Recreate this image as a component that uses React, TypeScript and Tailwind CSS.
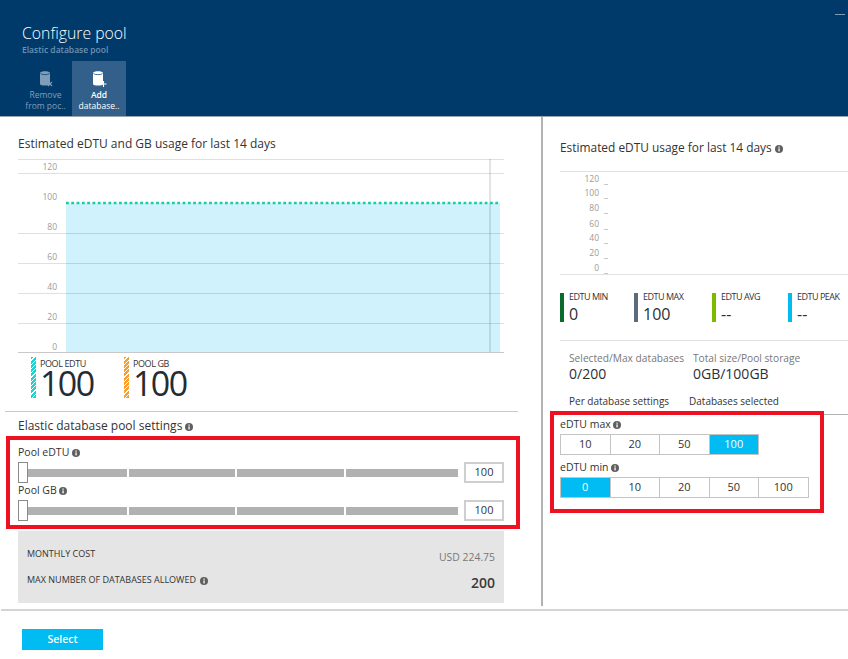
import React from "react";

const Info = ({ className = "" }: { className?: string }) => (
  <svg viewBox="0 0 8 8" className={`inline-block w-[8px] h-[8px] ${className}`}>
    <circle cx="4" cy="4" r="4" fill="#5f5f5f" />
    <rect x="3.4" y="3.4" width="1.3" height="3" fill="#fff" />
    <rect x="3.4" y="1.5" width="1.3" height="1.2" fill="#fff" />
  </svg>
);

const DbIcon = ({ color, mark, badge }: { color: string; mark: string; badge: "x" | "plus" }) => (
  <svg viewBox="0 0 16 18" className="w-[16px] h-[18px]">
    <path d="M2 3 C2 0.5 12 0.5 12 3 V14 C12 16 2 16 2 14 Z" fill={color} />
    <path d="M2.5 3.6 C4 5 10 5 11.5 3.6" fill="none" stroke="#003a6b" strokeWidth="0.7" />
    {badge === "x" ? (
      <path d="M10 12 L14 16 M14 12 L10 16" stroke={mark} strokeWidth="1.1" />
    ) : (
      <path d="M12.5 11 V17 M9.5 14 H15.5" stroke={mark} strokeWidth="1.1" />
    )}
  </svg>
);

const Slider = () => (
  <div className="flex items-center h-[21px]">
    <div className="w-[10px] h-[21px] bg-white border border-[#8a8a8a] shrink-0" />
    <div className="flex gap-[2px] w-[430px] h-[8px]">
      <div className="w-[99px] bg-[#b1b1b1]" />
      <div className="w-[106px] bg-[#b1b1b1]" />
      <div className="w-[107px] bg-[#b1b1b1]" />
      <div className="w-[112px] bg-[#b1b1b1]" />
    </div>
    <div className="ml-[6px] w-[40px] h-[21px] border-2 border-[#cfcfcf] flex items-center justify-center text-[11px] text-[#333]">100</div>
  </div>
);

const Metric = ({ label, value, color, w }: { label: string; value: string; color: string; w: string }) => (
  <div className={`flex ${w}`}>
    <div className="w-[4px] h-[29px] mt-[1px]" style={{ backgroundColor: color }} />
    <div className="ml-[5px] -mt-[1px]">
      <div className="text-[9px] leading-[12px] tracking-[-0.5px] text-[#333]">{label}</div>
      <div className="text-[16px] leading-[20px] mt-[1px] text-[#2b2f36]">{value}</div>
    </div>
  </div>
);

const Choice = ({ items, active }: { items: string[]; active: string }) => (
  <div className="flex">
    {items.map((t, i) => (
      <div
        key={t}
        className={`w-[50.5px] h-[21px] flex items-center justify-center text-[11px] border border-[#c4c4c4] ${i > 0 ? "-ml-px" : ""} ${
          t === active ? "bg-[#00bcf2] text-white border-[#7d8b93]" : "bg-white text-[#333]"
        }`}
      >
        {t}
      </div>
    ))}
  </div>
);

const LeftChart = () => {
  const rows = [
    ["120", 167],
    ["100", 197],
    ["80", 227],
    ["60", 257],
    ["40", 287],
    ["20", 317],
    ["0", 347],
  ] as const;
  return (
    <svg width="486" height="196" viewBox="18 158 486 196" className="block">
      <rect x="66" y="203" width="434" height="149" fill="#cff2fd" />
      {[159.5, 173.5, 233.5, 263.5, 293.5, 323.5].map((y) => (
        <line key={y} x1="18" x2="504" y1={y} y2={y} stroke="#000" strokeOpacity="0.12" />
      ))}
      <line x1="18" x2="504" y1="352.5" y2="352.5" stroke="#c9c9c9" />
      <line x1="490" x2="490" y1="159" y2="352" stroke="#000" strokeOpacity="0.14" strokeWidth="1.5" />
      <line x1="66" x2="500" y1="203" y2="203" stroke="#18cdaa" strokeWidth="2.5" strokeDasharray="2.8 2.5" />
      {rows.map(([t, y]) => (
        <text key={t} x="57" y={y + 3} textAnchor="end" fontSize="8.5" fill="#9a9a9a" fontFamily="Open Sans, sans-serif">{t}</text>
      ))}
    </svg>
  );
};

const RightChart = () => {
  const rows = [
    ["120", 179],
    ["100", 193],
    ["80", 208],
    ["60", 224],
    ["40", 238],
    ["20", 253],
    ["0", 268],
  ] as const;
  return (
    <svg width="288" height="104" viewBox="560 171 288 104" className="block">
      <line x1="560" x2="848" y1="171.5" y2="171.5" stroke="#e2e2e2" />
      <line x1="560" x2="848" y1="274.5" y2="274.5" stroke="#e2e2e2" />
      {rows.map(([t, y]) => (
        <g key={t}>
          <text x="599" y={y + 3} textAnchor="end" fontSize="8.5" fill="#9a9a9a" fontFamily="Open Sans, sans-serif">{t}</text>
          <line x1="604" x2="608" y1={y + 5.5} y2={y + 5.5} stroke="#c8c8c8" />
        </g>
      ))}
    </svg>
  );
};

const Pool = ({ label, stripe, w }: { label: string; stripe: string; w: string }) => (
  <div className={`flex ${w}`}>
    <div className={`w-[5px] h-[41px] ${stripe}`} />
    <div className="ml-[4px]">
      <div className="text-[9px] leading-[11px] tracking-[-0.4px] text-[#333] mt-[1px]">{label}</div>
      <div className="text-[34px] leading-[29px] tracking-[-1.6px] text-[#262b33]">100</div>
    </div>
  </div>
);

export default function App() {
  return (
    <div className="w-[848px] h-[659px] bg-white overflow-hidden font-['Open_Sans',sans-serif] text-[#333]">
      <header className="relative h-[117px] bg-[#003a6b] border-b border-[#9aa4ad] pl-[22px]">
        <div className="absolute right-[3px] top-[14px] w-[10px] h-px bg-[#7f9cb5]" />
        <div className="pt-[22px] h-[61px]">
          <div className="text-[15.8px] leading-[22px] font-light text-white">Configure pool</div>
          <div className="text-[8.5px] leading-[12px] font-semibold text-[#6f93b3]">Elastic database pool</div>
        </div>
        <div className="flex">
          <div className="w-[50px] h-[55px] flex flex-col items-center pt-[9px] pr-[3px] text-[8.5px] leading-[11px] text-[#7f9db8]">
            <DbIcon color="#7f9db8" mark="#7f9db8" badge="x" />
            <div className="mt-[1px]">Remove</div>
            <div>from poc..</div>
          </div>
          <div className="w-[54px] h-[55px] bg-[#32608a] flex flex-col items-center pt-[9px] text-[8.5px] leading-[11px] text-white">
            <DbIcon color="#ffffff" mark="#ffffff" badge="plus" />
            <div className="mt-[1px] font-semibold">Add</div>
            <div className="font-medium">database..</div>
          </div>
        </div>
      </header>

      <div className="flex h-[490px]">
        <section className="w-[541px] shrink-0">
          <div className="pl-[18px] pt-[18px]">
            <h2 className="text-[12px] leading-[17px] text-[#333] mb-[6px]">Estimated eDTU and GB usage for last 14 days</h2>
            <LeftChart />
            <div className="flex ml-[13px] mt-[3px]">
              <Pool label="POOL EDTU" w="w-[93px]" stripe="bg-[repeating-linear-gradient(135deg,#1fd0cc_0,#1fd0cc_2px,#ffffff_2px,#ffffff_3px)]" />
              <Pool label="POOL GB" w="w-[93px]" stripe="bg-[repeating-linear-gradient(135deg,#fb9d2d_0,#fb9d2d_2px,#ffffff_2px,#ffffff_3px)]" />
            </div>
          </div>
          <div className="ml-[5px] mt-[13px] w-[513px] h-px bg-[#c8c8c8]" />
          <div className="pl-[18px] mt-[5px] h-[19px] text-[12px] leading-[17px]">
            Elastic database pool settings <Info />
          </div>
          <div className="ml-[6px] w-[514px] h-[93px] border-4 border-[#ee1122] pl-[8px] pt-[5px]">
            <div className="text-[10.5px] leading-[14px] h-[17px]">Pool eDTU <Info /></div>
            <Slider />
            <div className="text-[10.5px] leading-[14px] h-[17px]">Pool GB <Info /></div>
            <Slider />
          </div>
          <div className="ml-[18px] mt-[2px] w-[486px] h-[72px] bg-[#e5e5e5] relative">
            <div className="flex justify-between pl-[9px] pr-[9px] pt-[17px] h-[43px]">
              <span className="text-[9px] leading-[12px] font-medium text-[#333]">MONTHLY COST</span>
              <span className="text-[10.4px] leading-[14px] mt-[2px] text-[#777]">USD 224.75</span>
            </div>
            <div className="flex justify-between pl-[9px] pr-[9px]">
              <span className="text-[9px] leading-[12px] font-medium text-[#333]">MAX NUMBER OF DATABASES ALLOWED <Info className="ml-[2px]" /></span>
              <span className="text-[14px] leading-[19px] font-semibold text-[#3a3a3a] -mt-[1px]">200</span>
            </div>
          </div>
        </section>

        <div className="w-[2px] h-[489px] bg-[#b2b2b2] shrink-0" />

        <section className="flex-1 min-w-0">
          <div className="pl-[17px] pt-[22px]">
            <h2 className="text-[11.9px] leading-[17px] h-[32px]">Estimated eDTU usage for last 14 days <Info /></h2>
            <RightChart />
            <div className="flex mt-[17px]">
              <Metric label="EDTU MIN" value="0" color="#0a6b2d" w="w-[74px]" />
              <Metric label="EDTU MAX" value="100" color="#5a6b7b" w="w-[78px]" />
              <Metric label="EDTU AVG" value="--" color="#7fba00" w="w-[76px]" />
              <Metric label="EDTU PEAK" value="--" color="#00bcf2" w="w-[60px]" />
            </div>
            <div className="mt-[16px] h-px bg-[#e2e2e2]" />
            <div className="flex pl-[9px] mt-[10px] text-[10.2px] leading-[14px]">
              <div className="w-[124px]">
                <div className="text-[#777] whitespace-nowrap">Selected/Max databases</div>
                <div className="text-[14px] leading-[18px] text-[#2b2f36]">0/200</div>
              </div>
              <div>
                <div className="text-[#777] whitespace-nowrap">Total size/Pool storage</div>
                <div className="text-[14px] leading-[18px] text-[#2b2f36]">0GB/100GB</div>
              </div>
            </div>
            <div className="flex pl-[9px] mt-[11px] text-[10px] leading-[14px] text-[#333]">
              <div className="w-[120px]">Per database settings</div>
              <div>Databases selected</div>
            </div>
          </div>
          <div className="flex items-start">
            <div className="ml-[7px] w-[274px] h-[102px] border-4 border-[#ee1122] pl-[6px] pt-[2px] mt-[3px] shrink-0">
              <div className="text-[10.5px] leading-[14px] h-[17px]">eDTU max <Info /></div>
              <Choice items={["10", "20", "50", "100"]} active="100" />
              <div className="text-[10.5px] leading-[14px] h-[17px] mt-[5px]">eDTU min <Info /></div>
              <Choice items={["0", "10", "20", "50", "100"]} active="0" />
            </div>
            <div className="flex-1 h-px mt-[6px] bg-[#b2b2b2]" />
          </div>
        </section>
      </div>

      <div className="mt-[2px] ml-[1px] h-[2px] bg-[#d4d4d4]" />
      <button className="block ml-[22px] mt-[18px] w-[81px] h-[21px] bg-[#00bcf2] text-white text-[10.5px] font-semibold">Select</button>
    </div>
  );
}
